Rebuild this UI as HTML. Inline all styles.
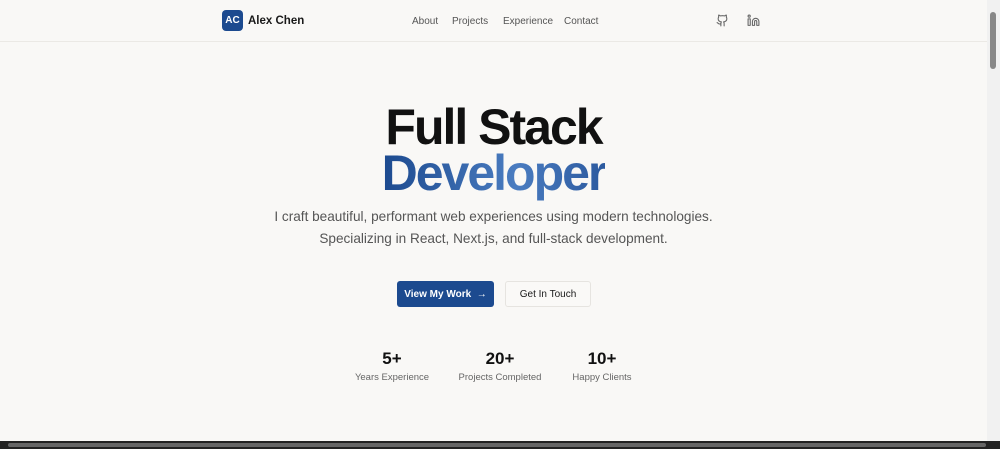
<!DOCTYPE html>
<html><head><style>
*{margin:0;padding:0;box-sizing:border-box}
body{width:1000px;height:449px;overflow:hidden;background:#f9f8f6;font-family:"Liberation Sans",sans-serif;position:relative}
.nav{position:absolute;left:0;top:0;width:987px;height:42px;border-bottom:1px solid #ebe9e5}
.logo{position:absolute;left:222px;top:10px;width:21px;height:21px;background:#1c4a8f;border-radius:4px;color:#fff;font-size:10px;font-weight:bold;text-align:center;line-height:21px}
.name{position:absolute;left:248px;top:15px;font-size:11.5px;font-weight:bold;color:#1a1a1a}
.links a{position:absolute;top:16px;font-size:10px;color:#555;text-decoration:none}
h1{position:absolute;left:0;width:987px;text-align:center;font-size:50px;letter-spacing:-2px;font-weight:bold;line-height:50px}
.sub{position:absolute;left:0;width:987px;top:206px;text-align:center;font-size:13.6px;color:#555;line-height:22px}
.b1{position:absolute;left:397px;top:281px;width:97px;height:26px;background:#1c4a8f;border-radius:3px;color:#fff;font-size:10px;font-weight:bold;display:flex;align-items:center;justify-content:center}
.b2{position:absolute;left:505px;top:281px;width:86px;height:26px;background:#faf9f7;border:1px solid #e6e4e0;border-radius:3px;color:#1a1a1a;font-size:10px;display:flex;align-items:center;justify-content:center}
.st{position:absolute;top:349px;width:120px;text-align:center}
.st b{display:block;font-size:17px;color:#111}
.st span{display:block;font-size:9.5px;color:#666;margin-top:3px}
</style></head><body>
<div class="nav">
<div class="logo">AC</div><div class="name">Alex Chen</div>
<div class="links"><a style="left:412px">About</a><a style="left:452px">Projects</a><a style="left:503px">Experience</a><a style="left:564px">Contact</a></div>
<svg style="position:absolute;left:716px;top:14px" width="13" height="13" viewBox="0 0 24 24" fill="none" stroke="#666" stroke-width="2" stroke-linecap="round" stroke-linejoin="round"><path d="M15 22v-4a4.8 4.8 0 0 0-1-3.5c3 0 6-2 6-5.5.1-1.3-.3-2.5-1-3.5.3-1.2.3-2.4 0-3.5 0 0-1 0-3 1.5-2.6-.5-5.4-.5-8 0C6 2 5 2 5 2c-.3 1.1-.3 2.300 0 3.5A5.4 5.4 0 0 0 4 9c0 3.5 3 5.5 6 5.5-.4.5-.7 1.1-.8 1.7-.2.6-.2 1.2-.2 1.8v4"/><path d="M9 18c-4.5 2-5-2-7-2"/></svg>
<svg style="position:absolute;left:747px;top:14px" width="13" height="13" viewBox="0 0 24 24" fill="none" stroke="#666" stroke-width="2" stroke-linecap="round" stroke-linejoin="round"><path d="M16 8a6 6 0 0 1 6 6v7h-4v-7a2 2 0 0 0-4 0v7h-4v-7a6 6 0 0 1 6-6z"/><rect x="2" y="9" width="4" height="12"/><circle cx="4" cy="4" r="2"/></svg>
</div>
<h1 style="top:102px;color:#111">Full Stack</h1>
<h1 style="top:148px"><span style="background:linear-gradient(90deg,#1c4a8f,#4a7cc0 60%,#2c5a9f);-webkit-background-clip:text;color:transparent">Developer</span></h1>
<div class="sub">I craft beautiful, performant web experiences using modern technologies.<br>Specializing in React, Next.js, and full-stack development.</div>
<div class="b1">View My Work &nbsp;→</div>
<div class="b2">Get In Touch</div>
<div class="st" style="left:332px"><b>5+</b><span>Years Experience</span></div>
<div class="st" style="left:440px"><b>20+</b><span>Projects Completed</span></div>
<div class="st" style="left:542px"><b>10+</b><span>Happy Clients</span></div>
<div style="position:absolute;left:987px;top:0;width:13px;height:441px;background:#f1f1f1"></div>
<div style="position:absolute;left:990px;top:12px;width:6px;height:57px;background:#888;border-radius:3px"></div>
<div style="position:absolute;left:0;top:441px;width:1000px;height:8px;background:#222"></div>
<div style="position:absolute;left:8px;top:443px;width:978px;height:4px;background:#666;border-radius:2px"></div>
</body></html>
